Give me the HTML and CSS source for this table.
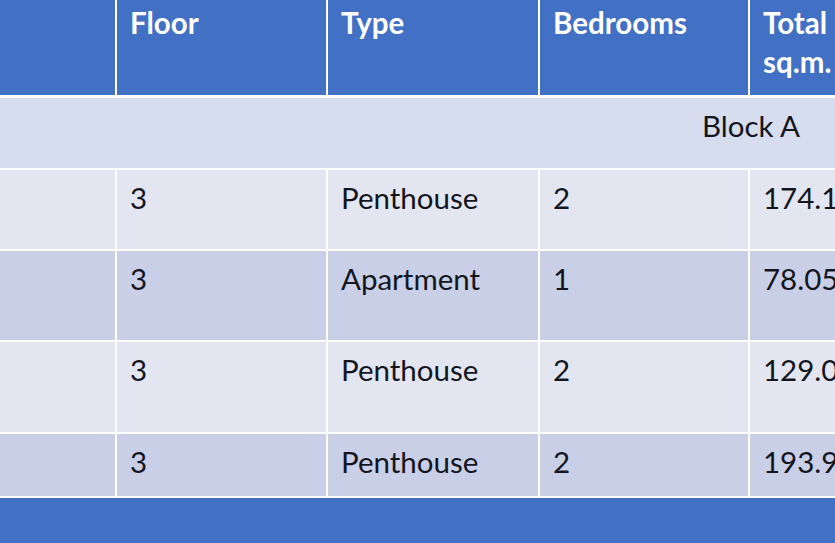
FILE: index.html
```html
<!DOCTYPE html>
<html>
<head>
<meta charset="utf-8">
<link rel="stylesheet" href="styles.css">
</head>
<body>
<div class="table">
  <div class="row head">
    <div class="cell c0"></div>
    <div class="cell c1">Floor</div>
    <div class="cell c2">Type</div>
    <div class="cell c3">Bedrooms</div>
    <div class="cell c4">Total sq.m.</div>
  </div>
  <div class="row group">
    <div class="cell span">Block A</div>
  </div>
  <div class="row light r1">
    <div class="cell c0"></div>
    <div class="cell c1">3</div>
    <div class="cell c2">Penthouse</div>
    <div class="cell c3">2</div>
    <div class="cell c4">174.15</div>
  </div>
  <div class="row dark r2">
    <div class="cell c0"></div>
    <div class="cell c1">3</div>
    <div class="cell c2">Apartment</div>
    <div class="cell c3">1</div>
    <div class="cell c4">78.05</div>
  </div>
  <div class="row light r3">
    <div class="cell c0"></div>
    <div class="cell c1">3</div>
    <div class="cell c2">Penthouse</div>
    <div class="cell c3">2</div>
    <div class="cell c4">129.05</div>
  </div>
  <div class="row dark r4">
    <div class="cell c0"></div>
    <div class="cell c1">3</div>
    <div class="cell c2">Penthouse</div>
    <div class="cell c3">2</div>
    <div class="cell c4">193.95</div>
  </div>
  <div class="footer"></div>
</div>
</body>
</html>
```

FILE: styles.css
```css
html, body {
  margin: 0;
  padding: 0;
  width: 835px;
  height: 543px;
  overflow: hidden;
  background: #ffffff;
}

.table {
  width: 1000px;
  display: flex;
  flex-direction: column;
  gap: 2px;
  background: #ffffff;
  font-family: Lato, "Open Sans", sans-serif;
  font-size: 29.5px;
  line-height: 39px;
  color: #14161f;
}

.row {
  display: flex;
  gap: 2px;
}

.cell {
  box-sizing: border-box;
  padding: 8px 13px 0 13px;
}

.c0 { width: 115px; }
.c1 { width: 209px; }
.c2 { width: 210px; }
.c3 { width: 208px; }
.c4 { width: 110px; }

.head {
  height: 95px;
  margin-bottom: 1px;
}
.head .cell {
  background: #4170c5;
  color: #ffffff;
  font-weight: bold;
  padding-top: 3px;
}

.group {
  height: 70px;
  background: #d6ddee;
}
.group .span {
  padding-left: 702px;
  width: 1000px;
}

.light .cell { background: #e3e6f1; }
.dark .cell { background: #c9cfe7; }

.r1 { height: 79px; }
.r2 { height: 89px; }
.r3 { height: 90px; }
.r4 { height: 62px; }

.footer {
  height: 60px;
  background: #4170c5;
}
```
